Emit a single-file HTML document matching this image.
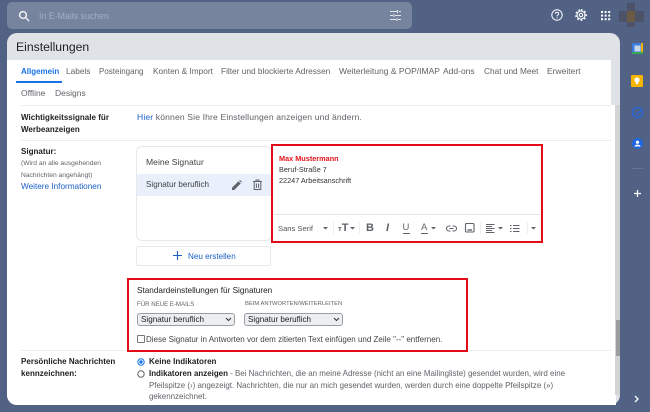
<!DOCTYPE html>
<html><head><meta charset="utf-8">
<style>
html,body{margin:0;padding:0}
body{width:650px;height:412px;position:relative;overflow:hidden;background:#516285}
#w{position:absolute;left:0;top:0;width:650px;height:412px;filter:blur(.3px);font-family:"Liberation Sans",sans-serif;color:#3c4043}
.a{position:absolute;white-space:nowrap}
.t{font-size:8.3px;line-height:11px;color:#5f6368}
.b{font-weight:bold;font-size:8px;line-height:11.5px;color:#202124;letter-spacing:.02px}
.p{font-size:7.95px;line-height:11px;color:#5f6368}
.l{position:absolute;height:1px;background:#ebedef}
svg{position:absolute;overflow:visible}
.red{position:absolute;border:2.5px solid #e30d18;box-sizing:border-box;z-index:2}
.sel{position:absolute;top:313px;height:13px;box-sizing:border-box;background:#eceef1;border:1px solid #9a9ea3;border-radius:3px;font-size:8.1px;line-height:11px;padding-left:3px;color:#202124}
.tool{font-weight:bold;color:#5f6368}
.sep{position:absolute;top:222px;width:1px;height:12px;background:#eceef0}
</style></head><body><div id="w">
<div class="a" style="left:7px;top:2px;width:405px;height:27px;background:#76849e;border-radius:5px"></div>
<svg style="left:18px;top:10px" width="12" height="12" fill="none" stroke="#eef0f4" stroke-width="1.5"><circle cx="5" cy="5" r="3.4"/><path d="M7.5 7.5L11 11"/></svg>
<div class="a" style="left:39px;top:10px;font-size:8.8px;line-height:12px;color:#a5afc2">In E-Mails suchen</div>
<svg style="left:390px;top:10px" width="12" height="11" stroke="#e3e6ec" stroke-width="1"><path d="M0 1.5H7M9 1.5H11M0 5.5H3M5 5.5H11M0 9.5H6M8 9.5H11M7.5 0V3M4 4V7M7 8V11"/></svg>
<svg style="left:551px;top:9px" width="13" height="13" fill="none" stroke="#fff" stroke-width="1"><circle cx="6" cy="6" r="5.2"/><path d="M4.4 4.8C4.4 2.8 7.7 2.8 7.7 4.8C7.7 6 6 6 6 7.4"/><path d="M6 8.4V9.4"/></svg>
<svg style="left:575px;top:9px" width="13" height="13" fill="none" stroke="#fff" stroke-width="1.1"><circle cx="6" cy="6" r="1.7"/><circle cx="6" cy="6" r="4"/><path stroke-width="1.4" stroke-dasharray="1.7 2" d="M6 .8A5.2 5.2 0 1 1 5.99 .8"/></svg>
<svg style="left:601px;top:11px" width="10" height="10" fill="#fff"><rect width="2" height="2"/><rect x="3.6" width="2" height="2"/><rect x="7.2" width="2" height="2"/><rect y="3.6" width="2" height="2"/><rect x="3.6" y="3.6" width="2" height="2"/><rect x="7.2" y="3.6" width="2" height="2"/><rect y="7.2" width="2" height="2"/><rect x="3.6" y="7.2" width="2" height="2"/><rect x="7.2" y="7.2" width="2" height="2"/></svg>
<div class="a" style="left:627px;top:3px;width:8px;height:24px;background:#4c5268"></div>
<div class="a" style="left:619px;top:11px;width:25px;height:11px;background:#4c5268"></div>
<div class="a" style="left:627px;top:11px;width:8px;height:11px;background:#6b5a45"></div>

<div class="a" style="left:7px;top:33px;width:613px;height:372px;background:#dfe3e8;border-radius:10px"></div>
<div class="a" style="left:7px;top:60px;width:604px;height:46px;background:#fff"></div>
<div class="a" style="left:7px;top:105px;width:609px;height:300px;background:#fff;border-radius:0 0 0 10px"></div>
<div class="a" style="left:615px;top:105px;width:5px;height:290px;background:#d3d4d4"></div>
<div class="a" style="left:616px;top:320px;width:3.5px;height:36px;background:#9b9d9f"></div>
<div class="a" style="left:16px;top:39px;font-size:12.2px;line-height:16px;color:#202124">Einstellungen</div>

<div class="a t" style="left:21px;top:66px;color:#1a73e8;font-weight:bold;font-size:8px">Allgemein</div>
<div class="a" style="left:16px;top:81px;width:46px;height:1.5px;background:#1a73e8"></div>
<div class="a t" style="left:66px;top:66px">Labels</div>
<div class="a t" style="left:99px;top:66px;font-size:8px">Posteingang</div>
<div class="a t" style="left:153px;top:66px">Konten &amp; Import</div>
<div class="a t" style="left:221px;top:66px">Filter und blockierte Adressen</div>
<div class="a t" style="left:339px;top:66px;font-size:8.5px">Weiterleitung &amp; POP/IMAP</div>
<div class="a t" style="left:443px;top:66px;font-size:8.5px">Add-ons</div>
<div class="a t" style="left:484px;top:66px">Chat und Meet</div>
<div class="a t" style="left:547px;top:66px;font-size:8.5px">Erweitert</div>
<div class="a t" style="left:21px;top:88px;font-size:8.5px">Offline</div>
<div class="a t" style="left:55px;top:88px;font-size:8.5px">Designs</div>
<div class="l" style="left:21px;top:105px;width:590px"></div>

<div class="a b" style="left:21px;top:112px">Wichtigkeitssignale für<br>Werbeanzeigen</div>
<div class="a" style="left:137px;top:112px;font-size:8.6px;line-height:11px;color:#5f6368;letter-spacing:.13px"><span style="color:#1a5fc4">Hier</span> können Sie Ihre Einstellungen anzeigen und ändern.</div>
<div class="l" style="left:21px;top:140px;width:590px"></div>

<div class="a b" style="left:21px;top:146px">Signatur:</div>
<div class="a" style="left:21px;top:158px;font-size:6.7px;line-height:11.7px;color:#5f6368">(Wird an alle ausgehenden<br>Nachrichten angehängt)</div>
<div class="a" style="left:21px;top:181px;font-size:8.2px;line-height:11px;color:#1a5fc4">Weitere Informationen</div>

<div class="a" style="left:136px;top:146px;width:136px;height:95px;box-sizing:border-box;border:1px solid #e6e8ea;border-radius:6px"></div>
<div class="a" style="left:146px;top:157px;font-size:8.6px;line-height:11px;color:#444">Meine Signatur</div>
<div class="a" style="left:137px;top:174px;width:134px;height:22px;background:#e9f0fb"></div>
<div class="a" style="left:146px;top:179px;font-size:8.1px;line-height:11px;color:#3c4043">Signatur beruflich</div>
<svg style="left:232px;top:180px" width="10" height="10" fill="#5f6368"><path d="M0 10V7.8L6.5 1.3L8.7 3.5L2.2 10ZM7.2 .6L8 0L10 2L9.4 2.8Z"/></svg>
<svg style="left:253px;top:180px" width="9" height="10" fill="none" stroke="#5f6368" stroke-width="1"><path d="M0 1.5H9M3 1.5V0H6V1.5M1.2 1.5V9.5H7.8V1.5M3.4 3.5V8M5.6 3.5V8"/></svg>
<div class="a" style="left:136px;top:246px;width:135px;height:20px;box-sizing:border-box;border:1px solid #e6e8ea;border-radius:2px"></div>
<svg style="left:173px;top:251px" width="9" height="9" stroke="#1a5fc4" stroke-width="1.1"><path d="M4.5 0V9M0 4.5H9"/></svg>
<div class="a" style="left:188px;top:251px;font-size:8.1px;line-height:11px;color:#1a5fc4">Neu erstellen</div>

<div class="red" style="left:271px;top:144px;width:272px;height:99px"></div>
<div class="a" style="left:279px;top:153px;font-size:7.3px;line-height:11px;font-weight:bold;color:#e3141c">Max Mustermann</div>
<div class="a" style="left:279px;top:164px;font-size:7.3px;line-height:11px;color:#333">Beruf-Straße 7</div>
<div class="a" style="left:279px;top:175px;font-size:7.3px;line-height:11px;color:#333">22247 Arbeitsanschrift</div>
<div class="l" style="left:274px;top:214px;width:266px;background:#e3e4e6"></div>
<div class="a" style="left:278px;top:223px;font-size:7.6px;line-height:11px;color:#555">Sans Serif</div>
<div class="sep" style="left:333px"></div><div class="sep" style="left:359px"></div><div class="sep" style="left:480px"></div><div class="sep" style="left:527px"></div>
<svg style="left:323px;top:226px" width="5" height="5" fill="#5f6368"><path d="M0 1H5L2.5 3.5Z"/></svg>
<div class="a tool" style="left:338px;top:221px;font-size:11px;line-height:14px"><span style="font-size:7.5px">т</span>T</div>
<svg style="left:350px;top:226px" width="5" height="5" fill="#5f6368"><path d="M0 1H5L2.5 3.5Z"/></svg>
<div class="a tool" style="left:366px;top:221px;font-size:11px;line-height:14px">B</div>
<div class="a tool" style="left:386px;top:221px;font-size:11px;line-height:14px;font-style:italic">I</div>
<div class="a tool" style="left:402.5px;top:222px;font-size:9.5px;line-height:11px;font-weight:normal">U</div>
<div class="a" style="left:402.5px;top:233px;width:7px;height:1px;background:#5f6368"></div>
<div class="a tool" style="left:421px;top:222px;font-size:9.5px;line-height:11px;font-weight:normal">A</div>
<div class="a" style="left:420.5px;top:233px;width:7px;height:1px;background:#5f6368"></div>
<svg style="left:431px;top:226px" width="5" height="5" fill="#5f6368"><path d="M0 1H5L2.5 3.5Z"/></svg>
<svg style="left:446px;top:224.5px" width="11" height="7" fill="none" stroke="#5f6368" stroke-width="1.1"><path d="M4.5 1H3A2.5 2.5 0 0 0 3 6H4.5M6.5 1H8A2.5 2.5 0 0 1 8 6H6.5M3.5 3.5H7.5"/></svg>
<svg style="left:465px;top:223px" width="10" height="10" fill="none" stroke="#5f6368" stroke-width="1.1"><rect x=".5" y=".5" width="8.5" height="8.5" rx="1"/><path d="M2.5 7H7" stroke-width="1.4"/></svg>
<svg style="left:486px;top:223.5px" width="9" height="9" stroke="#5f6368"><path d="M0 .5H8.5M0 2.5H6M0 4.5H8.5M0 6.5H6M0 8.5H8.5"/></svg>
<svg style="left:498px;top:226px" width="5" height="5" fill="#5f6368"><path d="M0 1H5L2.5 3.5Z"/></svg>
<svg style="left:510px;top:223.5px" width="10" height="9" stroke="#5f6368"><path d="M3 1.5H9.5M3 4.5H9.5M3 7.5H9.5M0 1.5H1.5M0 4.5H1.5M0 7.5H1.5"/></svg>
<svg style="left:530.5px;top:226px" width="5" height="5" fill="#5f6368"><path d="M0 1H5L2.5 3.5Z"/></svg>

<div class="red" style="left:126.5px;top:278px;width:341px;height:74px"></div>
<div class="a" style="left:137px;top:285px;font-size:8.2px;line-height:11px;color:#202124">Standardeinstellungen für Signaturen</div>
<div class="a" style="left:137px;top:300px;font-size:6.1px;line-height:9px;color:#5f6368">FÜR NEUE E-MAILS</div>
<div class="a" style="left:245px;top:300px;font-size:5.8px;line-height:9px;color:#5f6368">BEIM ANTWORTEN/WEITERLEITEN</div>
<div class="sel" style="left:137px;width:98px">Signatur beruflich</div>
<div class="sel" style="left:244px;width:99px">Signatur beruflich</div>
<svg style="left:226px;top:317px" width="116" height="5" fill="none" stroke="#333" stroke-width="1"><path d="M0 1L2.5 3.5L5 1"/><path d="M108 1L110.5 3.5L113 1"/></svg>
<div class="a" style="left:137px;top:335px;width:6px;height:6px;border:1px solid #777;border-radius:1px"></div>
<div class="a" style="left:146px;top:333.5px;font-size:8px;line-height:11px;color:#444">Diese Signatur in Antworten vor dem zitierten Text einfügen und Zeile "--" entfernen.</div>
<div class="l" style="left:21px;top:350px;width:590px"></div>

<div class="a b" style="left:21px;top:356px">Persönliche Nachrichten<br>kennzeichnen:</div>
<svg style="left:137px;top:358px" width="8" height="20" fill="none"><circle cx="4" cy="4" r="3.2" stroke="#1a73e8"/><circle cx="4" cy="4" r="1.7" fill="#1a73e8"/><circle cx="4" cy="16" r="3.2" stroke="#666"/></svg>
<div class="a b" style="left:149px;top:356px">Keine Indikatoren</div>
<div class="a p" style="left:149px;top:368px"><b style="color:#202124">Indikatoren anzeigen</b> - Bei Nachrichten, die an meine Adresse (nicht an eine Mailingliste) gesendet wurden, wird eine</div>
<div class="a p" style="left:149px;top:379.5px">Pfeilspitze (›) angezeigt. Nachrichten, die nur an mich gesendet wurden, werden durch eine doppelte Pfeilspitze (»)</div>
<div class="a p" style="left:149px;top:391px">gekennzeichnet.</div>

<svg style="left:631.5px;top:43px" width="11" height="11"><rect width="11" height="11" rx="1" fill="#3a7be0"/><path d="M0 9H11V11H0Z" fill="#34a853"/><path d="M9 0H11V9H9Z" fill="#f4b400"/><rect x="2.5" y="2.5" width="6" height="6" fill="#c9d6ea"/></svg>
<svg style="left:631px;top:75px" width="12" height="12"><rect width="12" height="12" rx="1" fill="#f4b400"/><circle cx="6" cy="5" r="2.6" fill="#fff"/><rect x="4.8" y="7.5" width="2.4" height="1.6" fill="#fff"/></svg>
<svg style="left:632px;top:106.5px" width="11" height="11"><circle cx="5.5" cy="5.5" r="5" fill="none" stroke="#2b66d3" stroke-width="1.6"/><path d="M3.5 5.5L5.5 7.5L9 3" stroke="#2b66d3" stroke-width="1.2" fill="none"/></svg>
<svg style="left:631.5px;top:137.5px" width="11" height="11"><circle cx="5.5" cy="5.5" r="5.5" fill="#1f66e0"/><circle cx="5.5" cy="4.2" r="1.6" fill="#fff"/><path d="M2.5 8.5C2.5 6 8.5 6 8.5 8.5Z" fill="#fff"/></svg>
<div class="a" style="left:632px;top:168px;width:11px;height:1px;background:#677693"></div>
<svg style="left:633px;top:189px" width="9" height="9" stroke="#fff" stroke-width="1.2"><path d="M4.5 1V8M1 4.5H8"/></svg>
<svg style="left:634px;top:395px" width="6" height="8" fill="none" stroke="#fff" stroke-width="1.3"><path d="M1 1L4 4L1 7"/></svg>
</div></body></html>
